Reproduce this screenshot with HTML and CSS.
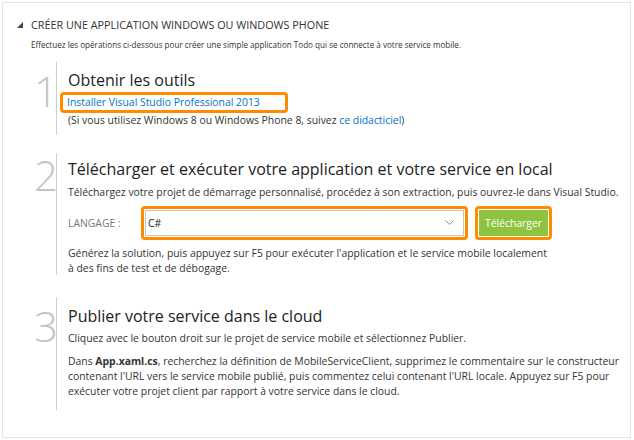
FILE: index.html
```html
<!DOCTYPE html>
<html lang="fr">
<head>
<meta charset="utf-8">
<link rel="stylesheet" href="styles.css">
</head>
<body>
<div class="panel">
  <div class="header">
    <span class="tri"></span>
    <span class="htext">CRÉER UNE APPLICATION WINDOWS OU WINDOWS PHONE</span>
  </div>
  <p class="intro">Effectuez les opérations ci-dessous pour créer une simple application Todo qui se connecte à votre service mobile.</p>

  <div class="step step1">
    <div class="num">1</div>
    <div class="body">
      <h2 class="title">Obtenir les outils</h2>
      <div class="hl hl-link"><a class="link" href="#">Installer Visual Studio Professional 2013</a></div>
      <p class="txt">(Si vous utilisez Windows 8 ou Windows Phone 8, suivez <a class="link" href="#">ce didacticiel</a>)</p>
    </div>
  </div>

  <div class="step step2">
    <div class="num">2</div>
    <div class="body">
      <h2 class="title">Télécharger et exécuter votre application et votre service en local</h2>
      <p class="txt">Téléchargez votre projet de démarrage personnalisé, procédez à son extraction, puis ouvrez-le dans Visual Studio.</p>
      <div class="langrow">
        <span class="lang">LANGAGE :</span>
        <div class="hl hl-select">
          <div class="select"><span>C#</span>
            <svg class="chev" width="9" height="6" viewBox="0 0 9 6"><path d="M0.5 0.5 L4.5 4.5 L8.5 0.5" fill="none" stroke="#8a8a8a" stroke-width="1"/></svg>
          </div>
        </div>
        <div class="hl hl-btn"><div class="btn">Télécharger</div></div>
      </div>
      <p class="txt">Générez la solution, puis appuyez sur F5 pour exécuter l'application et le service mobile localement<br>à des fins de test et de débogage.</p>
    </div>
  </div>

  <div class="step step3">
    <div class="num">3</div>
    <div class="body">
      <h2 class="title">Publier votre service dans le cloud</h2>
      <p class="txt">Cliquez avec le bouton droit sur le projet de service mobile et sélectionnez Publier.</p>
      <p class="txt para">Dans <b>App.xaml.cs</b>, recherchez la définition de MobileServiceClient, supprimez le commentaire sur le constructeur<br>contenant l'URL vers le service mobile publié, puis commentez celui contenant l'URL locale. Appuyez sur F5 pour<br>exécuter votre projet client par rapport à votre service dans le cloud.</p>
    </div>
  </div>
</div>
</body>
</html>
```

FILE: styles.css
```css
html, body {
  margin: 0;
  padding: 0;
  background: #ffffff;
}
body {
  font-family: "Segoe UI", "Open Sans", "Noto Sans", sans-serif;
  color: #333333;
}
.panel {
  margin: 2px 0 0 2px;
  width: 627px;
  height: 434px;
  border: 1px solid #e4e4e4;
  box-sizing: content-box;
}
.header {
  display: flex;
  align-items: center;
  margin: 13px 0 0 14px;
  height: 16px;
}
.tri {
  width: 0;
  height: 0;
  border-style: solid;
  border-width: 0 0 6px 6px;
  border-color: transparent transparent #444 transparent;
  margin-right: 8px;
  margin-top: 1px;
}
.htext {
  font-size: 10.8px;
  color: #333;
}
.intro {
  margin: 6px 0 0 28px;
  font-size: 8.1px;
  line-height: 14px;
}
.step {
  display: flex;
  margin-left: 30px;
}
.step1 { margin-top: 10px; }
.step2 { margin-top: 18px; }
.step3 { margin-top: 22px; }
.num {
  width: 22px;
  font-size: 42px;
  font-weight: 300;
  color: #c4c4c4;
  line-height: 40px;
  text-align: left;
  padding-left: 1px;
}
.step1 .num { margin-top: 9px; }
.step2 .num { margin-top: 2px; }
.step3 .num { margin-top: 9px; }
.body {
  border-left: 1px solid #cfcfcf;
  padding-left: 11px;
  box-sizing: border-box;
}
.title {
  margin: 0;
  font-size: 16px;
  font-weight: 400;
  color: #222;
  line-height: 22px;
  white-space: nowrap;
}
.step1 .body { height: 73px; padding-top: 7px; }
.step2 .body { height: 122px; padding-top: 5px; }
.step3 .body { height: 113px; padding-top: 8px; }
.txt {
  margin: 0;
  font-size: 10.4px;
  line-height: 15px;
  white-space: nowrap;
}
.txt b { font-weight: 700; }
.step2 .title + .txt { margin-top: 5px; }
.step3 .title + .txt { margin-top: 4px; }
.para { margin-top: 8px; }
.link {
  color: #0072c6;
  text-decoration: none;
}
.hl {
  border: 3px solid #ff8c00;
  border-radius: 4px;
  box-sizing: border-box;
}
.hl-link {
  margin-left: -8px;
  width: 228px;
  height: 21px;
  padding: 0 0 0 4px;
  font-size: 10.4px;
  line-height: 15px;
  margin-top: 1px;
}
.langrow {
  display: flex;
  align-items: center;
  margin-top: 6px;
}
.lang {
  font-size: 10.4px;
  color: #777;
  width: 73px;
}
.hl-select {
  width: 327px;
  height: 34px;
  padding: 1px;
}
.select {
  height: 100%;
  border: 1px solid #c4c4c4;
  box-sizing: border-box;
  display: flex;
  align-items: center;
  justify-content: space-between;
  padding: 0 9px 0 2px;
  font-size: 10.4px;
  color: #222;
}
.hl-btn {
  margin-left: 7px;
  width: 77px;
  height: 34px;
  padding: 1px;
}
.btn {
  height: 100%;
  background: #8cc43f;
  color: #fff;
  font-size: 10.4px;
  display: flex;
  align-items: center;
  justify-content: center;
}
.langrow + .txt { margin-top: 6px; }
```
